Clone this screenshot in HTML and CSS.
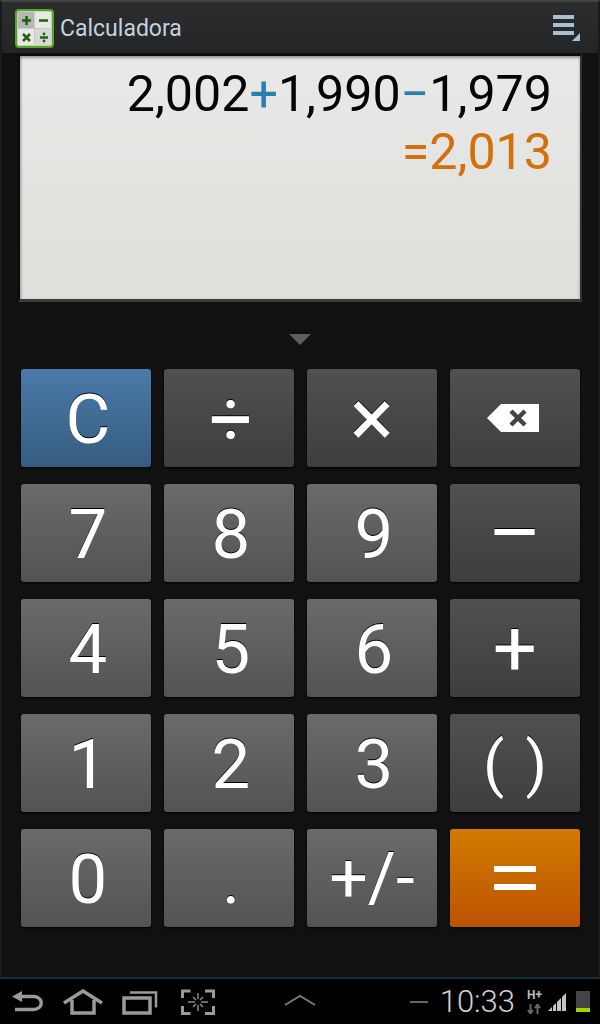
FILE: index.html
```html
<!DOCTYPE html>
<html lang="en">
<head>
    <meta charset="UTF-8">
    <meta name="viewport" content="width=device-width, initial-scale=1.0">
    <title>Calculadora</title>
    <link rel="stylesheet" href="styles.css">
</head>
<body>
    <div class="app">
        <header class="title-bar">
            <svg class="app-icon" width="39" height="39" viewBox="0 0 39 39">
                <rect x="1" y="1" width="37" height="37" rx="3" fill="#c9cbc7" stroke="#53a81c" stroke-width="2"/>
                <rect x="3" y="3" width="16" height="16" fill="#b5b8b2"/>
                <rect x="20" y="3" width="16" height="16" fill="#e8e8e6"/>
                <rect x="3" y="20" width="16" height="16" fill="#e8e8e6"/>
                <rect x="20" y="20" width="16" height="16" fill="#d8d9d6"/>
                <path d="M7 11.500h9M11.500 7v9M24 11.500h9M8 25l7 7M15 25l-7 7M25 28.500h8" stroke="#22600c" stroke-width="2.500" fill="none"/>
                <circle cx="29" cy="25" r="1.400" fill="#22600c"/>
                <circle cx="29" cy="32" r="1.400" fill="#22600c"/>
            </svg>
            <div class="app-title">Calculadora</div>
            <svg class="menu-icon" width="28" height="28" viewBox="0 0 28 28">
                <rect x="1" y="2" width="21" height="4" fill="#a9c0d2"/>
                <rect x="1" y="10" width="21" height="4" fill="#a9c0d2"/>
                <rect x="1" y="18" width="21" height="4" fill="#a9c0d2"/>
                <path d="M28 20v8h-8z" fill="#a9c0d2"/>
            </svg>
        </header>

        <section class="display">
            <div class="expression">2,002<span class="op">+</span>1,990<span class="op">&minus;</span>1,979</div>
            <div class="answer">=2,013</div>
        </section>

        <div class="toggle"><span class="arrow"></span></div>

        <main class="keypad">
            <button class="key key-blue">C</button>
            <button class="key key-dark key-sym">&divide;</button>
            <button class="key key-dark key-times">&times;</button>
            <button class="key key-dark key-icon">
                <svg width="54" height="28" viewBox="0 0 54 28">
                    <path d="M1 14 15 0h38v28H15z" fill="#fff"/>
                    <path d="M25 7l14 14M39 7 25 21" stroke="#444" stroke-width="4.5" fill="none"/>
                </svg>
            </button>
            <button class="key">7</button>
            <button class="key">8</button>
            <button class="key">9</button>
            <button class="key key-dark key-times">&ndash;</button>
            <button class="key">4</button>
            <button class="key">5</button>
            <button class="key">6</button>
            <button class="key key-dark key-plus">+</button>
            <button class="key">1</button>
            <button class="key">2</button>
            <button class="key">3</button>
            <button class="key key-dark key-paren">( )</button>
            <button class="key">0</button>
            <button class="key">.</button>
            <button class="key key-sign">+/-</button>
            <button class="key key-orange">
                <svg width="42" height="26" viewBox="0 0 42 26">
                    <rect y="1" width="42" height="6" fill="#fff"/>
                    <rect y="19" width="42" height="6" fill="#fff"/>
                </svg>
            </button>
        </main>

        <footer class="nav-bar">
            <div class="nav-left">
                <svg width="34" height="26" viewBox="0 0 34 26">
                    <path d="M12 2 2 7.500 12 13" fill="#9a9a9a"/>
                    <path d="M9 7.500h14c11 0 11 13 0 13H5" stroke="#9a9a9a" stroke-width="3.500" fill="none"/>
                </svg>
                <svg width="40" height="26" viewBox="0 0 40 26">
                    <path d="M1 14 20 2l19 12M9 11v13h22V11" stroke="#9a9a9a" stroke-width="3.500" fill="none"/>
                </svg>
                <svg width="36" height="26" viewBox="0 0 36 26">
                    <rect x="2" y="9" width="26" height="15" stroke="#9a9a9a" stroke-width="3.500" fill="none"/>
                    <path d="M8 3.500h26v15" stroke="#9a9a9a" stroke-width="2.500" fill="none"/>
                </svg>
                <svg class="nav-shot" width="34" height="26" viewBox="0 0 34 26">
                    <path d="M1.500 9V2h8M24 2h8.500v7M1.500 17v7.500h8M24 24.500h8.500V17" stroke="#9a9a9a" stroke-width="3" fill="none"/>
                    <path d="M17 4v6M17 16v6M7 13h7M20 13h7M12 8l3 3M22 8l-3 3M12 18l3-3M22 18l-3-3" stroke="#8a8a8a" stroke-width="1.500" fill="none"/>
                </svg>
            </div>
            <svg class="nav-up" width="32" height="12" viewBox="0 0 32 12">
                <path d="M1 11 16 2l15 9" stroke="#777" stroke-width="2" fill="none"/>
            </svg>
            <div class="status">
                <span class="status-dash"></span>
                <span class="clock">10:33</span>
                <div class="net">
                    <span class="net-text">H+</span>
                    <svg width="14" height="10" viewBox="0 0 14 10">
                        <path d="M3.500 0v9M1 6l2.500 3.500L6 6M10.500 10V1M8 4l2.500-3.500L13 4" stroke="#666" stroke-width="2" fill="none"/>
                    </svg>
                </div>
                <svg class="signal" width="20" height="20" viewBox="0 0 20 20">
                    <path d="M0 19 4 15v4zM5 14l3-3v8H5zM9 10l4-4v13H9zM14 5l4-4v18h-4z" fill="#c4c4c4"/>
                </svg>
                <div class="battery"><span class="battery-level"></span></div>
            </div>
        </footer>
    </div>
</body>
</html>
```

FILE: styles.css
```css
body {
    margin: 0;
    background-color: #000;
    font-family: Roboto, "Liberation Sans", sans-serif;
}
.app {
    width: 600px;
    height: 1024px;
    display: flex;
    flex-direction: column;
    box-sizing: border-box;
    background-color: #111;
    box-shadow: inset 2px 0 0 #1c1c1c, inset -2px 0 0 #1c1c1c;
    overflow: hidden;
}
.title-bar {
    height: 53px;
    flex: none;
    box-sizing: border-box;
    display: flex;
    align-items: center;
    padding: 2px 18px 0 15px;
    background: linear-gradient(#2c2d2f, #242527);
    border-top: 2px solid #444;
    border-left: 2px solid #1a1a1a;
    border-right: 2px solid #1a1a1a;
}
.app-icon {
    flex: none;
    margin-left: -2px;
}
.app-title {
    flex: 1;
    margin-left: 6px;
    color: #c3d2de;
    font-size: 23px;
}
.menu-icon {
    flex: none;
    margin-top: -4px;
    overflow: visible;
}
.display {
    height: 248px;
    flex: none;
    box-sizing: border-box;
    margin: 1px 18px 0;
    padding: 9px 28px 0 0;
    text-align: right;
    background: linear-gradient(#e9e9e7, #dddfda);
    border: 2px solid #0c0c0c;
    border-bottom: 3px solid #3d3d3d;
    border-right-color: #333;
    box-shadow: inset 0 2px 3px rgba(0, 0, 0, 0.35), inset 2px 0 2px rgba(0, 0, 0, 0.1);
    font-size: 50.2px;
    line-height: 58px;
    color: #050505;
}
.op {
    color: #2a7fb0;
}
.answer {
    color: #d36f0c;
}
.toggle {
    height: 67px;
    flex: none;
    display: flex;
    align-items: center;
    justify-content: center;
    padding-top: 8px;
    box-sizing: border-box;
}
.arrow {
    width: 0;
    height: 0;
    border-left: 11px solid transparent;
    border-right: 11px solid transparent;
    border-top: 11px solid #5e5e5e;
}
.keypad {
    display: grid;
    grid-template-columns: repeat(4, 130px);
    grid-auto-rows: 98px;
    column-gap: 13px;
    row-gap: 17px;
    padding-left: 21px;
    flex: 1;
}
.key {
    display: flex;
    align-items: center;
    justify-content: center;
    padding: 2px 0 0 4px;
    border: none;
    border-radius: 3px;
    background: linear-gradient(#6a6a6a, #535353);
    box-shadow: 0 1px 2px #000;
    color: #fff;
    font-family: Roboto, "Liberation Sans", sans-serif;
    font-size: 69px;
    font-weight: 400;
    text-shadow: 0 -1px 0 #000;
}
.key-dark {
    background: linear-gradient(#505050, #3e3e3e);
}
.key-blue {
    background: linear-gradient(#4a7aa9, #365c80);
}
.key-orange {
    background: linear-gradient(#d27a02, #bc5200);
    padding: 0;
}
.key-sym {
    font-size: 76px;
}
.key-times {
    font-size: 82px;
    padding: 0;
}
.key-plus {
    font-size: 78px;
    padding: 0;
}
.key-icon {
    padding: 0 4px 0 0;
}
.key-paren {
    font-size: 62px;
    padding: 0;
    word-spacing: 6px;
}
.key-sign {
    font-size: 68px;
    padding: 0;
}
.nav-bar {
    height: 47px;
    flex: none;
    box-sizing: border-box;
    display: flex;
    align-items: center;
    padding: 0 10px;
    background-color: #000;
    border-top: 2px solid #12303c;
}
.nav-left {
    display: flex;
    align-items: center;
    gap: 19px;
    width: 274px;
}
.nav-shot {
    margin-left: 4px;
}
.nav-up {
    flex: none;
    margin-top: -4px;
}
.status {
    flex: 1;
    display: flex;
    align-items: center;
    justify-content: flex-end;
}
.status-dash {
    width: 18px;
    height: 2px;
    margin-right: 12px;
    background-color: #666;
}
.clock {
    color: #d2d2d2;
    font-size: 31px;
    font-weight: 300;
    margin-right: 12px;
}
.net {
    width: 17px;
    display: flex;
    flex-direction: column;
    gap: 2px;
    margin-right: 4px;
}
.net-text {
    color: #bbb;
    font-size: 12px;
    font-weight: 700;
    line-height: 13px;
}
.battery {
    width: 14px;
    height: 21px;
    margin-left: 8px;
    display: flex;
    align-items: flex-end;
    background-color: #444;
}
.battery-level {
    width: 100%;
    height: 4px;
    background-color: #a4d400;
}
```
